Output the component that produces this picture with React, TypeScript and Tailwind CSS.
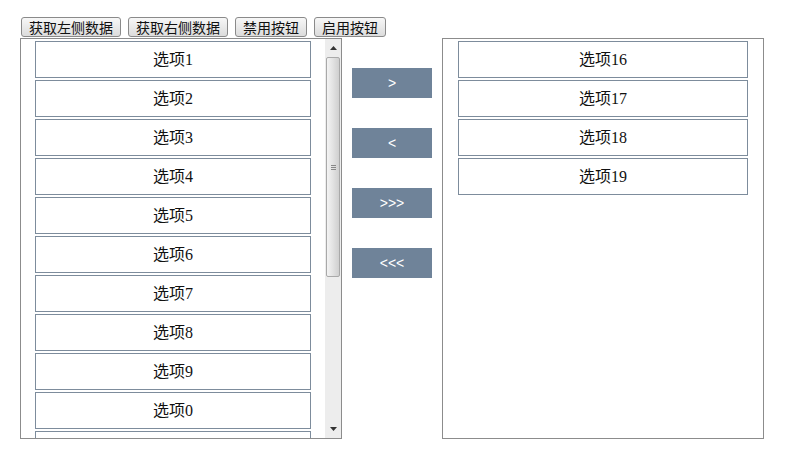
import React from 'react';

const leftItems = ['选项1', '选项2', '选项3', '选项4', '选项5', '选项6', '选项7', '选项8', '选项9', '选项0', '选项10'];
const rightItems = ['选项16', '选项17', '选项18', '选项19'];
const toolButtons = ['获取左侧数据', '获取右侧数据', '禁用按钮', '启用按钮'];
const moveButtons = ['>', '<', '>>>', '<<<'];

const itemFont = { fontFamily: '"Liberation Serif", "Noto Sans CJK SC", serif' };
const uiFont = { fontFamily: '"Noto Sans CJK SC", "Liberation Sans", sans-serif' };

function Item({ label }: { label: string }) {
  return (
    <li
      className="h-[37px] mb-[2px] border border-[#7d8c9c] bg-white flex items-center justify-center text-[16px] text-[#111] shrink-0"
      style={itemFont}
    >
      {label}
    </li>
  );
}

function FakeScrollbar() {
  return (
    <div className="w-[16px] h-full bg-[#ededed] flex flex-col shrink-0">
      <div className="h-[18px] flex items-center justify-center">
        <svg width="7" height="4" viewBox="0 0 7 4">
          <path d="M0 4 L3.5 0 L7 4 Z" fill="#333" />
        </svg>
      </div>
      <div className="mx-[1px] h-[220px] rounded-[2px] border border-[#a9a9a9] bg-gradient-to-r from-[#f4f4f4] via-[#e2e2e2] to-[#cfcfcf] flex items-center justify-center">
        <div className="flex flex-col gap-[1px]">
          <div className="w-[5px] h-[1px] bg-[#888]" />
          <div className="w-[5px] h-[1px] bg-[#888]" />
          <div className="w-[5px] h-[1px] bg-[#888]" />
        </div>
      </div>
      <div className="flex-1" />
      <div className="h-[18px] flex items-center justify-center">
        <svg width="7" height="4" viewBox="0 0 7 4">
          <path d="M0 0 L7 0 L3.5 4 Z" fill="#333" />
        </svg>
      </div>
    </div>
  );
}

export default function App() {
  return (
    <div className="w-[789px] h-[466px] bg-white pl-[20px] pt-[17px]">
      <div className="flex gap-[7px] pl-[1px] h-[20px]">
        {toolButtons.map((b) => (
          <button
            key={b}
            className="h-[20px] px-[7px] text-[14px] leading-none text-[#111] border border-[#8a8a8a] rounded-[3px] bg-gradient-to-b from-[#f7f7f7] to-[#dcdcdc]"
            style={uiFont}
          >
            {b}
          </button>
        ))}
      </div>
      <div className="flex mt-[1px]">
        <div className="w-[322px] h-[401px] border border-[#8c8c8c] flex overflow-hidden">
          <ul className="flex-1 pl-[14px] pr-[14px] pt-[2px] flex flex-col overflow-hidden">
            {leftItems.map((it) => (
              <Item key={it} label={it} />
            ))}
          </ul>
          <FakeScrollbar />
        </div>
        <div className="w-[100px] flex flex-col items-center pt-[30px] gap-[30px]">
          {moveButtons.map((b) => (
            <button
              key={b}
              className="w-[80px] h-[30px] bg-[#6f8399] text-white text-[14px]"
              style={{ fontFamily: '"Liberation Sans", sans-serif' }}
            >
              {b}
            </button>
          ))}
        </div>
        <div className="w-[322px] h-[401px] border border-[#8c8c8c]">
          <ul className="pl-[15px] pr-[15px] pt-[2px] flex flex-col">
            {rightItems.map((it) => (
              <Item key={it} label={it} />
            ))}
          </ul>
        </div>
      </div>
    </div>
  );
}
